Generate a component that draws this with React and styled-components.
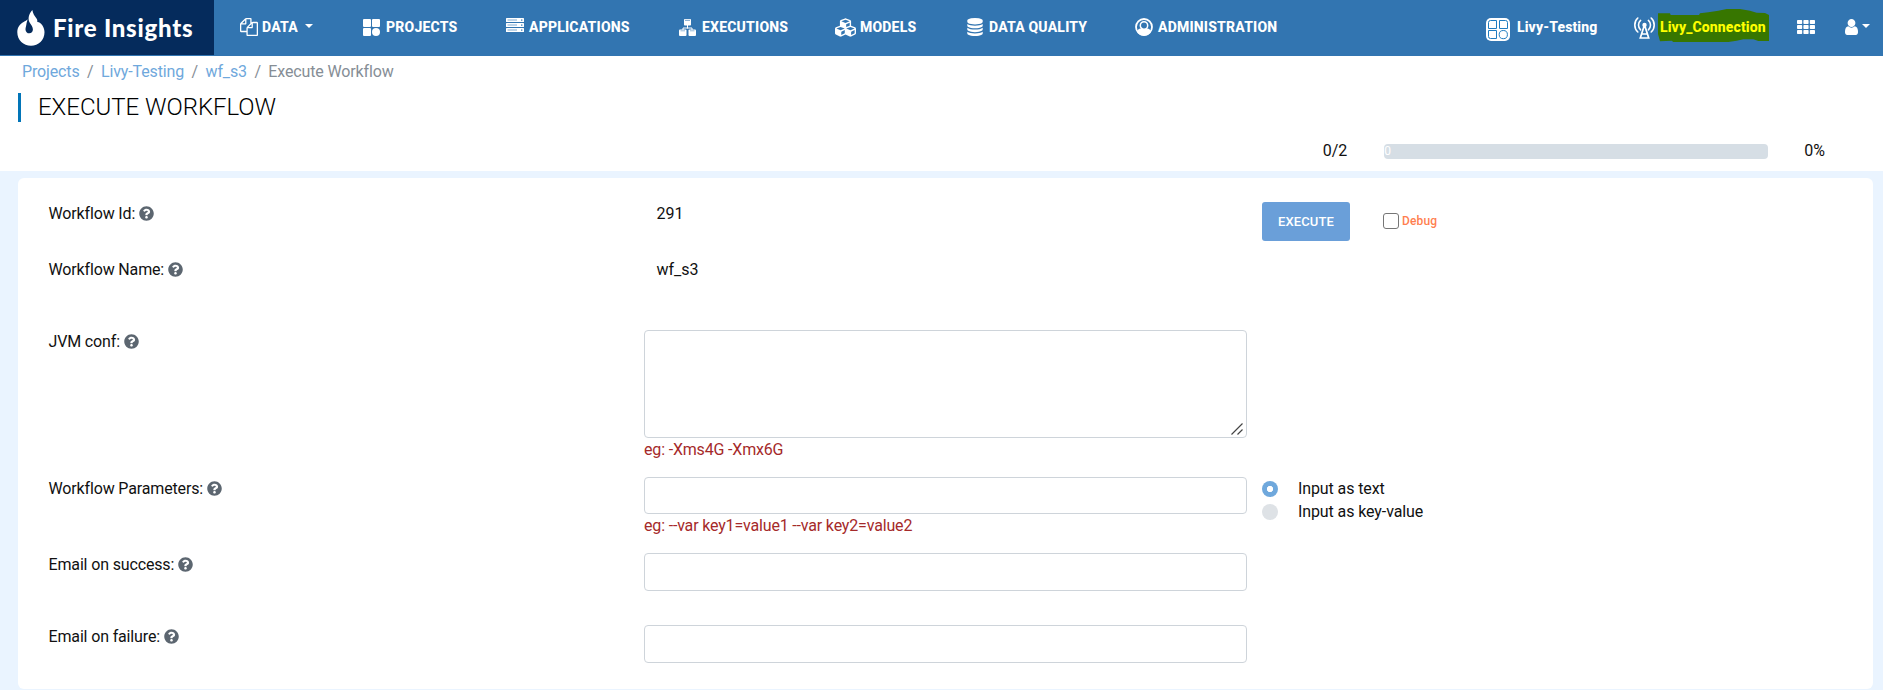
import React from "react";
import styled, { createGlobalStyle } from "styled-components";
import { FaCubes, FaQuestionCircle } from "react-icons/fa";

const GlobalStyle = createGlobalStyle`
  *, *::before, *::after { box-sizing: border-box; }
  html, body { height: 100%; }
  body {
    margin: 0;
    background: #eaf4ff;
    color: #111;
    font: 400 16px/24px Roboto, "Liberation Sans", sans-serif;
    overflow: hidden;
  }
`;

const Header = styled.header`
  display: flex;
  height: 56px;
  background: #3275b1;
  color: #fff;
`;

const Brand = styled.a`
  display: flex;
  align-items: flex-start;
  gap: 8px;
  width: 214px;
  height: 55px;
  padding: 9px 0 0 17px;
  background: #052b5c;
`;

const BrandName = styled.span`
  font: 900 24px/38px Lato, sans-serif;
  letter-spacing: 0.75px;
  white-space: nowrap;
`;

const Nav = styled.nav`
  display: flex;
  gap: 49px;
  margin-left: 26px;
  height: 54px;
  align-items: center;
`;

const NavItem = styled.a`
  display: flex;
  align-items: center;
  width: ${(p) => p.$width}px;
  font-size: 14px;
  font-weight: 800;
  letter-spacing: 0.2px;
  line-height: 18px;
  white-space: nowrap;
  svg { flex: none; }
`;

const NavIcon = styled.span`
  display: flex;
  flex: none;
  width: ${(p) => p.$width}px;
  height: 20px;
  align-items: center;
`;

const Caret = styled.span`
  margin: -2px 0 0 ${(p) => p.$gap}px;
  border: solid transparent;
  border-width: 4px 4px 0;
  border-top-color: #fff;
`;

const Tools = styled.div`
  display: flex;
  align-items: center;
  height: 54px;
  margin-left: auto;
  padding-right: 13px;
  font-size: 14px;
  font-weight: 800;
  letter-spacing: 0.12px;
  white-space: nowrap;
`;

const Project = styled.div`
  display: flex;
  align-items: center;
  gap: 7px;
  width: 148px;
  svg { margin-top: 4px; }
`;

const Connection = styled.div`
  display: flex;
  align-items: center;
  width: 163px;
  > svg { margin-top: 2px; margin-right: 5px; }
`;

const Marked = styled.span`
  position: relative;
  color: #ff0;
  > svg { position: absolute; left: -2px; top: -6px; }
  > span { position: relative; }
`;

const Account = styled.div`
  display: flex;
  align-items: center;
  margin-left: 30px;
`;

const Heading = styled.section`
  height: 115px;
  background: #fff;
`;

const Crumbs = styled.div`
  display: flex;
  padding: 4px 0 0 22px;
  color: #868e96;
  letter-spacing: -0.14px;
`;

const Crumb = styled.span`
  color: ${(p) => (p.$link ? "#6fa8dc" : "#868e96")};
`;

const Separator = styled.span`
  padding: 0 7.5px;
  color: #868e96;
`;

const Title = styled.h1`
  margin: 9px 0 0 18px;
  padding-left: 17px;
  height: 29px;
  border-left: 3px solid #0275b8;
  font-size: 24px;
  font-weight: 300;
  line-height: 28px;
  letter-spacing: -0.03px;
  color: #000;
`;

const Progress = styled.div`
  display: flex;
  align-items: center;
  justify-content: flex-end;
  margin-top: 17px;
  padding-right: 58px;
`;

const Track = styled.div`
  width: 384px;
  height: 15px;
  margin: 1px 36px 0 37px;
  border-radius: 4px;
  background: #d6dee5;
  color: #fff;
  font-size: 12px;
  line-height: 14px;
`;

const Card = styled.main`
  height: 511px;
  margin: 7px 10px 0 18px;
  padding: 24px 30px 0;
  border-radius: 6px;
  background: #fff;
`;

const Row = styled.div`
  display: grid;
  grid-template-columns: 596px 603px 1fr;
  column-gap: 0;
  height: ${(p) => p.$height}px;
`;

const Label = styled.label`
  display: flex;
  align-items: center;
  gap: 4px;
  height: 24px;
  padding-left: 0.5px;
  letter-spacing: -0.15px;
  svg { color: #5c6670; margin-top: -2px; }
`;

const Value = styled.div`
  padding-left: 12.5px;
`;

const Field = styled.div`
  display: flex;
  flex-direction: column;
`;

const Input = styled.input`
  width: 100%;
  height: ${(p) => p.$height}px;
  border: 1px solid #ced4da;
  border-radius: 4px;
  background: #fff;
`;

const AreaFrame = styled.div`
  display: flex;
  position: relative;
  > svg { position: absolute; right: 4px; bottom: 3px; }
`;

const TextArea = styled.textarea`
  width: 100%;
  height: 108px;
  border: 1px solid #ced4da;
  border-radius: 4px;
  background: #fff;
  resize: none;
`;

const Hint = styled.span`
  color: #a52a2a;
  line-height: 24px;
  letter-spacing: -0.17px;
`;

const Side = styled.div`
  display: flex;
  align-items: flex-start;
  padding-left: 15px;
`;

const ExecuteButton = styled.button`
  width: 88px;
  height: 39px;
  padding: 0;
  border: 0;
  border-radius: 3px;
  background: #6a9fd9;
  color: #fff;
  font: 500 13px/39px Roboto, sans-serif;
  letter-spacing: 0.15px;
`;

const Debug = styled.label`
  display: flex;
  align-items: center;
  gap: 3px;
  margin: 11px 0 0 33px;
  color: #ff7f50;
  font-size: 12px;
  font-weight: 500;
  line-height: 16px;
  letter-spacing: 0.15px;
`;

const CheckBox = styled.span`
  width: 16px;
  height: 16px;
  border: 1px solid #767676;
  border-radius: 3px;
`;

const Radios = styled.div`
  display: flex;
  flex-direction: column;
  padding-left: 15px;
`;

const Radio = styled.label`
  display: flex;
  align-items: center;
  gap: 20px;
  height: 23px;
  letter-spacing: -0.1px;
`;

const Dot = styled.span`
  width: 16px;
  height: 16px;
  border-radius: 50%;
  background: ${(p) => (p.$on ? "radial-gradient(circle, #fff 0 2.8px, #6fa8dc 3.5px)" : "#dee2e6")};
`;

const FilesIcon = () => (
  <svg width="18" height="18" viewBox="0 0 1792 1792" fill="#fff">
    <path d="M1696 384q40 0 68 28t28 68v1216q0 40-28 68t-68 28h-960q-40 0-68-28t-28-68v-288h-544q-40 0-68-28t-28-68v-672q0-40 20-88t48-76l408-408q28-28 76-48t88-20h416q40 0 68 28t28 68v328q68-40 128-40h416zm-544 213l-299 299h299v-299zm-640-384l-299 299h299v-299zm196 647l316-316v-416h-384v416q0 40-28 68t-68 28h-416v640h512v-256q0-40 20-88t48-76zm956 804v-1152h-384v416q0 40-28 68t-68 28h-416v640h896z" />
  </svg>
);

const TilesIcon = () => (
  <svg width="17" height="17" viewBox="0 0 17 17" fill="#fff">
    <rect width="8" height="8" rx="1" />
    <rect x="9" width="8" height="8" rx="1" />
    <rect y="9" width="8" height="8" rx="1" />
    <circle cx="13" cy="13" r="4" />
  </svg>
);

const ServerIcon = () => (
  <svg width="18" height="18" viewBox="0 0 18 18">
    {[1, 6, 11].map((y) => (
      <g key={y}>
        <rect x="0" y={y - 1} width="18" height="4" rx="0.6" fill="#fff" />
        <path d={`M1.5 ${y + 1}H11`} stroke="#7fa9d0" strokeWidth="1" />
        <rect x="15" y={y + 0.5} width="1.4" height="1.2" fill="#3275b1" />
      </g>
    ))}
  </svg>
);

const OrgIcon = () => (
  <svg width="17" height="17" viewBox="0 0 17 17" fill="#fff">
    <rect x="5" width="7" height="6.5" rx="0.8" />
    <path d="M6 1.3h5" stroke="#3275b1" strokeWidth="0.7" />
    <path d="M8.5 6v3.5M4 11V9h9v2" fill="none" stroke="#fff" strokeWidth="1" />
    <rect y="10.5" width="7.5" height="6.5" rx="1" />
    <rect x="9.5" y="10.5" width="7.5" height="6.5" rx="1" />
    <path d="M1.5 11.8h4.5M11 11.8h4.5" stroke="#3275b1" strokeWidth="0.5" />
  </svg>
);

const DatabaseIcon = () => (
  <svg width="18" height="18" viewBox="0 0 1792 1792" fill="#fff">
    <path d="M896 768q237 0 443-43t325-127v170q0 69-103 128t-280 93.5-385 34.5-385-34.5-280-93.5-103-128v-170q119 84 325 127t443 43zm0 768q237 0 443-43t325-127v170q0 69-103 128t-280 93.5-385 34.5-385-34.5-280-93.5-103-128v-170q119 84 325 127t443 43zm0-384q237 0 443-43t325-127v170q0 69-103 128t-280 93.5-385 34.5-385-34.5-280-93.5-103-128v-170q119 84 325 127t443 43zm0-1152q208 0 385 34.5t280 93.5 103 128v128q0 69-103 128t-280 93.5-385 34.5-385-34.5-280-93.5-103-128v-128q0-69 103-128t280-93.5 385-34.5z" />
  </svg>
);

const UserCircleIcon = () => (
  <svg width="18" height="18" viewBox="0 0 18 18">
    <circle cx="9" cy="9" r="8" fill="none" stroke="#fff" strokeWidth="1.8" />
    <path d="M1.800 13.500C3 11.500 4 10.700 5.500 10.500L9 11l3.500-.5c1.500.2 2.500 1 3.700 3A8.300 8.300 0 0 1 1.800 13.500z" fill="#fff" />
    <circle cx="9" cy="7.500" r="3.700" fill="#3275b1" stroke="#fff" strokeWidth="1.500" />
  </svg>
);

const FlameIcon = () => (
  <svg width="28" height="38" viewBox="0 0 28 38">
    <path
      d="M15.300 1C16 4.500 17.500 7 19.500 9.500c.7 1 1 2 .8 3.500 2-.1 3.700 1.200 5 3.200 1.500 2.200 2.200 4.600 2.200 7C27.500 31 21.500 36.800 14 36.800S.3 31 .3 23.200c0-5 2.700-8.200 6.300-10.200 1.700-1 3-1.600 4-2.800-.3 2-1 3.200-1.200 5-.3 2-.9 3.500-.9 5.200 0 2.400 1.700 3.900 3.800 3.900s3.600-1.500 3.600-3.800c0-2.600-1.700-4.300-3-6.500-2.200-3.500-1.700-8.500 2.400-13z"
      fill="#fff"
    />
  </svg>
);

const ProjectIcon = () => (
  <svg width="24" height="23" viewBox="0 0 24 23">
    <rect width="24" height="23" rx="5" fill="#fff" />
    <g fill="none" stroke="#1f7cc0" strokeWidth="1">
      <path d="M2.500 10.500v-6q0-2 2-2h6v8zM13.500 2.500h6q2 0 2 2v6h-8zM2.500 12.500h8v8h-6q-2 0-2-2z" />
      <circle cx="17.300" cy="16.600" r="4.100" />
    </g>
  </svg>
);

const TowerIcon = () => (
  <svg width="21" height="22" viewBox="0 0 21 22" fill="none" stroke="#fff" strokeLinecap="round">
    <path d="M3.800 1C-.2 4.500-.2 11.500 3.800 15M17.200 1c4 3.500 4 10.500 0 14" strokeWidth="1.600" />
    <path d="M6.600 3.400c-2.800 2.400-2.800 7 0 9.400M14.400 3.400c2.800 2.400 2.800 7 0 9.400" strokeWidth="1.600" />
    <path d="M9.800 10L6.300 21h8.400L11.200 10M8.200 17h4.600" strokeWidth="1.700" />
    <circle cx="10.500" cy="8" r="2.200" fill="#fff" stroke="none" />
  </svg>
);

const HighlightStroke = () => (
  <svg width="111" height="34" viewBox="0 0 333 102">
    <path
      d="M0 13H36L38 18H123L126 13 151 10 181 5 206 0H246L276 5 296 11 321 12 333 18V96H301L286 91H256L236 95 211 99H46L41 95 6 97 0 75z"
      fill="#377600"
    />
  </svg>
);

const GridIcon = () => (
  <svg width="18" height="14" viewBox="0 0 18 14" fill="#fff">
    {[0, 5, 10].map((y) =>
      [0, 6.400, 12.800].map((x) => <rect key={`${x}-${y}`} x={x} y={y} width="5.200" height="4" rx="0.700" />)
    )}
  </svg>
);

const UserIcon = () => (
  <svg width="13" height="16" viewBox="256 128 1280 1536" fill="#fff" preserveAspectRatio="none">
    <path d="M1536 1399q0 109-62.500 187t-150.500 78h-854q-88 0-150.500-78t-62.500-187q0-85 8.500-160.500t31.500-152 58.500-131 94-89 134.500-34.500q131 128 313 128t313-128q76 0 134.500 34.500t94 89 58.500 131 31.500 152 8.500 160.500zm-256-887q0 159-112.500 271.500t-271.500 112.500-271.500-112.500-112.500-271.500 112.500-271.500 271.500-112.500 271.500 112.500 112.500 271.500z" />
  </svg>
);

const ResizeGrip = () => (
  <svg width="12" height="12" viewBox="0 0 12 12" stroke="#444" strokeWidth="1.200">
    <path d="M0.500 11.500L11.500 0.500M6.500 11.500L11.500 6.500" />
  </svg>
);

const navItems = [
  { name: "DATA", icon: <FilesIcon />, iconWidth: 22, width: 74, caret: true },
  { name: "PROJECTS", icon: <TilesIcon />, iconWidth: 23, width: 94 },
  { name: "APPLICATIONS", icon: <ServerIcon />, iconWidth: 23, width: 124 },
  { name: "EXECUTIONS", icon: <OrgIcon />, iconWidth: 23, width: 107 },
  { name: "MODELS", icon: <FaCubes size={21} />, iconWidth: 25, width: 82 },
  { name: "DATA QUALITY", icon: <DatabaseIcon />, iconWidth: 23, width: 120 },
  { name: "ADMINISTRATION", icon: <UserCircleIcon />, iconWidth: 23, width: 143 },
];

const crumbs = ["Projects", "Livy-Testing", "wf_s3", "Execute Workflow"];

const HelpLabel = ({ children }) => (
  <Label>
    {children}
    <FaQuestionCircle size={15} />
  </Label>
);

export default function App() {
  return (
    <>
      <GlobalStyle />
      <Header>
        <Brand>
          <FlameIcon />
          <BrandName>Fire Insights</BrandName>
        </Brand>
        <Nav>
          {navItems.map((item) => (
            <NavItem key={item.name} $width={item.width}>
              <NavIcon $width={item.iconWidth}>{item.icon}</NavIcon>
              {item.name}
              {item.caret && <Caret $gap={7} />}
            </NavItem>
          ))}
        </Nav>
        <Tools>
          <Project>
            <ProjectIcon />
            Livy-Testing
          </Project>
          <Connection>
            <TowerIcon />
            <Marked>
              <HighlightStroke />
              <span>Livy_Connection</span>
            </Marked>
          </Connection>
          <GridIcon />
          <Account>
            <UserIcon />
            <Caret $gap={4} />
          </Account>
        </Tools>
      </Header>
      <Heading>
        <Crumbs>
          {crumbs.map((name, i) => (
            <React.Fragment key={name}>
              {i > 0 && <Separator>/</Separator>}
              <Crumb $link={i < crumbs.length - 1}>{name}</Crumb>
            </React.Fragment>
          ))}
        </Crumbs>
        <Title>EXECUTE WORKFLOW</Title>
        <Progress>
          <span>0/2</span>
          <Track>0</Track>
          <span>0%</span>
        </Progress>
      </Heading>
      <Card>
        <Row $height={56}>
          <HelpLabel>Workflow Id:</HelpLabel>
          <Value>291</Value>
          <Side>
            <ExecuteButton>EXECUTE</ExecuteButton>
            <Debug>
              <CheckBox />
              <span>Debug</span>
            </Debug>
          </Side>
        </Row>
        <Row $height={72}>
          <HelpLabel>Workflow Name:</HelpLabel>
          <Value>wf_s3</Value>
        </Row>
        <Row $height={147}>
          <HelpLabel>JVM conf:</HelpLabel>
          <Field>
            <AreaFrame>
              <TextArea />
              <ResizeGrip />
            </AreaFrame>
            <Hint>eg: -Xms4G -Xmx6G</Hint>
          </Field>
        </Row>
        <Row $height={76}>
          <HelpLabel>Workflow Parameters:</HelpLabel>
          <Field>
            <Input $height={37} />
            <Hint>eg: --var key1=value1 --var key2=value2</Hint>
          </Field>
          <Radios>
            <Radio>
              <Dot $on />
              Input as text
            </Radio>
            <Radio>
              <Dot />
              Input as key-value
            </Radio>
          </Radios>
        </Row>
        <Row $height={72}>
          <HelpLabel>Email on success:</HelpLabel>
          <Field>
            <Input $height={38} />
          </Field>
        </Row>
        <Row $height={64}>
          <HelpLabel>Email on failure:</HelpLabel>
          <Field>
            <Input $height={38} />
          </Field>
        </Row>
      </Card>
    </>
  );
}
